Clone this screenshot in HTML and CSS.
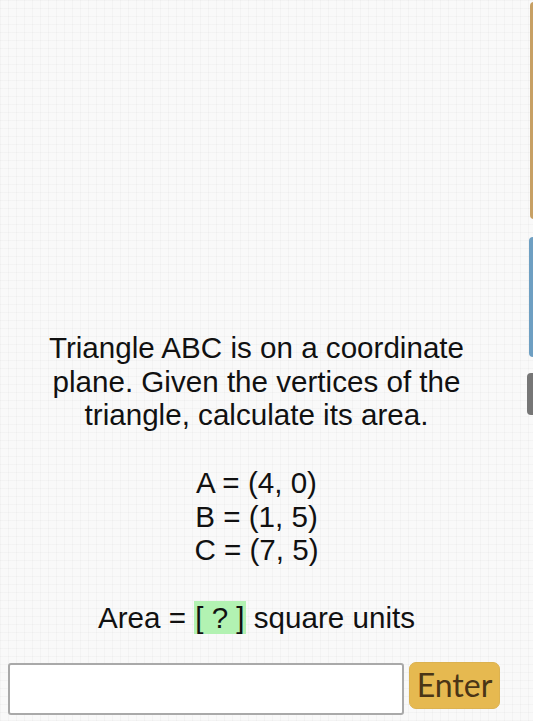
FILE: index.html
```html
<!DOCTYPE html>
<html>
<head>
<meta charset="utf-8">
<link rel="stylesheet" href="styles.css">
</head>
<body>
<div class="page">
  <main class="content">
    <div class="question">
      <p class="prompt">Triangle ABC is on a coordinate plane. Given the vertices of the triangle, calculate its area.</p>
      <div class="points">
        <div>A = (4, 0)</div>
        <div>B = (1, 5)</div>
        <div>C = (7, 5)</div>
      </div>
      <p class="answer">Area = <span class="blank">[ ? ]</span> square units</p>
    </div>
    <form class="entry">
      <input class="field" type="text" aria-label="Answer">
      <button class="enter" type="button">Enter</button>
    </form>
  </main>
  <div class="tab tab-orange"></div>
  <div class="tab tab-blue"></div>
  <div class="tab tab-gray"></div>
</div>
</body>
</html>
```
FILE: styles.css
```css
html, body {
  margin: 0;
  padding: 0;
}
body {
  width: 533px;
  height: 721px;
  overflow: hidden;
  background-color: #f9f9f9;
  background-image:
    repeating-linear-gradient(0deg, rgba(0,0,0,0.022) 0 1px, transparent 1px 8px),
    repeating-linear-gradient(90deg, rgba(0,0,0,0.022) 0 1px, transparent 1px 8px);
  font-family: "Liberation Sans", Arial, sans-serif;
  color: #111;
}
.page {
  position: relative;
  width: 533px;
  height: 721px;
}
.content {
  width: 513px;
  padding-top: 331px;
  display: flex;
  flex-direction: column;
}
.question {
  text-align: center;
  font-size: 29.6px;
  line-height: 33.7px;
}
.prompt {
  margin: 0 auto;
  width: 450px;
}
.points {
  margin-top: 33.7px;
}
.answer {
  margin: 33.7px 0 0;
}
.blank {
  background: #b2f2b2;
  padding: 0 1px;
}
.entry {
  display: flex;
  align-items: flex-start;
  gap: 5px;
  margin: 28px 0 0 8px;
}
.field {
  box-sizing: border-box;
  width: 396px;
  height: 52px;
  margin: 1px 0 0;
  border: 2px solid #a9a9a9;
  border-radius: 3px;
  background: #fff;
}
.enter {
  box-sizing: border-box;
  width: 91px;
  height: 47px;
  border: 1px solid #dcb250;
  border-radius: 7px;
  background: #e6b950;
  color: #4a3516;
  font-family: Lato, "Liberation Sans", sans-serif;
  font-size: 32px;
  padding: 0 0 2px;
}
.tab {
  position: absolute;
  border-radius: 4px 0 0 4px;
}
.tab-orange {
  left: 530px;
  top: 2px;
  width: 6px;
  height: 217px;
  background: #c7a064;
}
.tab-blue {
  left: 529px;
  top: 237px;
  width: 6px;
  height: 120px;
  background: #6e9fc2;
}
.tab-gray {
  left: 527px;
  top: 373px;
  width: 8px;
  height: 42px;
  background: #767676;
}
```
